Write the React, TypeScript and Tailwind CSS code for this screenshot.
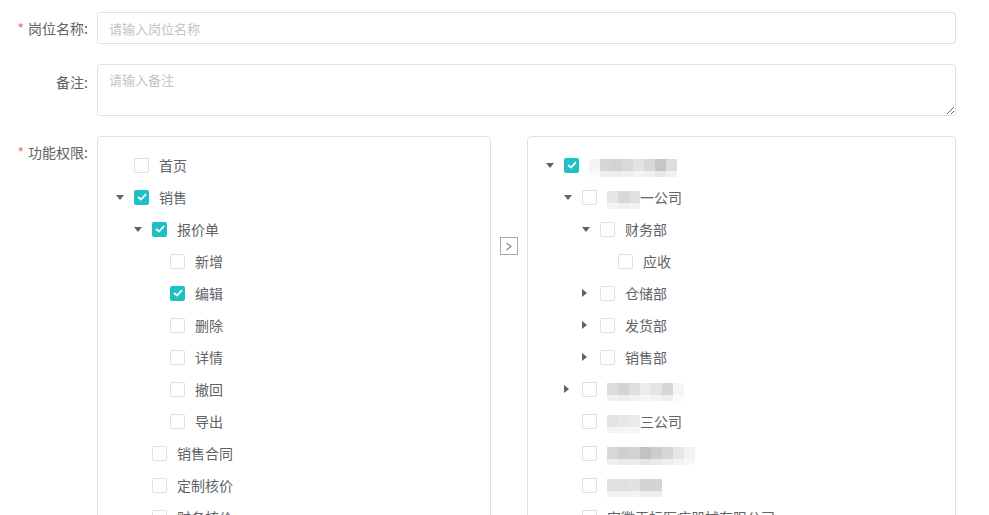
import React from "react"

type Node = {
  label?: string
  mosaic?: string[]
  suffix?: string
  level: number
  arrow?: "down" | "right"
  checked?: boolean
}

const leftTree: Node[] = [
  { label: "首页", level: 0 },
  { label: "销售", level: 0, arrow: "down", checked: true },
  { label: "报价单", level: 1, arrow: "down", checked: true },
  { label: "新增", level: 2 },
  { label: "编辑", level: 2, checked: true },
  { label: "删除", level: 2 },
  { label: "详情", level: 2 },
  { label: "撤回", level: 2 },
  { label: "导出", level: 2 },
  { label: "销售合同", level: 1 },
  { label: "定制核价", level: 1 },
  { label: "财务核价", level: 1 },
]

const rightTree: Node[] = [
  {
    level: 0,
    arrow: "down",
    checked: true,
    mosaic: ["#f4f4f4", "#d6d6d6", "#d3d3d3", "#d9d9d9", "#e2e2e2", "#d8d8d8", "#c6c6c6", "#dddddd"],
  },
  { level: 1, arrow: "down", mosaic: ["#e6e6e6", "#d8d8d8", "#e0e0e0"], suffix: "一公司" },
  { label: "财务部", level: 2, arrow: "down" },
  { label: "应收", level: 3 },
  { label: "仓储部", level: 2, arrow: "right" },
  { label: "发货部", level: 2, arrow: "right" },
  { label: "销售部", level: 2, arrow: "right" },
  {
    level: 1,
    arrow: "right",
    mosaic: ["#dcdcdc", "#d4d4d4", "#dedede", "#ececec", "#e4e4e4", "#d6d6d6", "#f6f6f6"],
  },
  { level: 1, mosaic: ["#e4e4e4", "#e8e8e8", "#ebebeb"], suffix: "三公司" },
  {
    level: 1,
    mosaic: ["#d8d8d8", "#cfcfcf", "#d2d2d2", "#c2c2c2", "#cccccc", "#d6d6d6", "#e6e6e6", "#f2f2f2"],
  },
  { level: 1, mosaic: ["#e0e0e0", "#e0e0e0", "#e2e2e2", "#d4d4d4", "#d4d4d4"] },
  { label: "安徽天标医疗器械有限公司", level: 1 },
]

function Caret({ dir }: { dir: "down" | "right" }) {
  return dir === "down" ? (
    <svg width="8" height="5" viewBox="0 0 8 5">
      <path d="M0 0 L8 0 L4 5 Z" fill="#606266" />
    </svg>
  ) : (
    <svg width="5" height="8" viewBox="0 0 5 8">
      <path d="M0 0 L5 4 L0 8 Z" fill="#606266" />
    </svg>
  )
}

function Checkbox({ checked }: { checked?: boolean }) {
  return checked ? (
    <span className="flex h-[15px] w-[15px] items-center justify-center rounded-[2px] bg-[#1ec0c6]">
      <svg width="10" height="8" viewBox="0 0 10 8">
        <path d="M1 4 L4 6.6 L9 1.2" fill="none" stroke="#fff" strokeWidth="1.8" />
      </svg>
    </span>
  ) : (
    <span className="h-[15px] w-[15px] rounded-[2px] border border-[#dcdfe6] bg-white" />
  )
}

// blurred (pixelated) company names
function Mosaic({ shades }: { shades: string[] }) {
  return (
    <span className="flex flex-col">
      <span className="flex">
        {shades.map((c, i) => (
          <span key={i} className="h-[12px] w-[11px]" style={{ background: c }} />
        ))}
      </span>
      <span className="flex opacity-40">
        {shades.map((c, i) => (
          <span key={i} className="h-[6px] w-[11px]" style={{ background: c }} />
        ))}
      </span>
    </span>
  )
}

function TreeRow({ node }: { node: Node }) {
  return (
    <div className="flex h-[32px] items-center" style={{ paddingLeft: 16 + node.level * 18 }}>
      <span className="flex w-[20px] items-center pl-[2px]">
        {node.arrow && <Caret dir={node.arrow} />}
      </span>
      <Checkbox checked={node.checked} />
      <span className="ml-[10px] flex items-center text-[14px] text-[#606266]">
        {node.mosaic && (
          <span className="mt-[5px]">
            <Mosaic shades={node.mosaic} />
          </span>
        )}
        {node.label}
        {node.suffix}
      </span>
    </div>
  )
}

export default function App() {
  return (
    <div
      className="h-screen overflow-hidden bg-white pr-[33px] pt-[12px]"
      style={{ fontFamily: '"Noto Sans CJK SC", "Noto Sans", sans-serif' }}
    >
      <div className="flex">
        <div className="w-[97px] shrink-0 pr-[9px] text-right text-[14px] leading-[32px] text-[#606266]">
          <span className="mr-[4px] text-[#f56c6c]">*</span>岗位名称:
        </div>
        <input
          className="h-[32px] flex-1 rounded-[4px] border border-[#dcdfe6] px-[11px] text-[13px] text-[#606266] outline-none placeholder:text-[#c0c4cc]"
          placeholder="请输入岗位名称"
        />
      </div>

      <div className="mt-[20px] flex">
        <div className="w-[97px] shrink-0 pr-[9px] pt-[2px] text-right text-[14px] leading-[32px] text-[#606266]">
          备注:
        </div>
        <textarea
          className="h-[52px] flex-1 rounded-[4px] border border-[#dcdfe6] px-[11px] py-[5px] text-[13px] text-[#606266] outline-none placeholder:text-[#c0c4cc]"
          placeholder="请输入备注"
        />
      </div>

      <div className="mt-[20px] flex">
        <div className="w-[97px] shrink-0 pr-[9px] text-right text-[14px] leading-[32px] text-[#606266]">
          <span className="mr-[4px] text-[#f56c6c]">*</span>功能权限:
        </div>
        <div className="flex flex-1">
          <div className="h-[420px] w-[394px] shrink-0 rounded-[4px] border border-[#dcdfe6] pt-[12px]">
            {leftTree.map((n, i) => (
              <TreeRow key={i} node={n} />
            ))}
          </div>
          <div className="flex w-[36px] shrink-0 justify-center pt-[101px]">
            <span className="flex h-[18px] w-[18px] items-center justify-center border border-[#a8a8a8] bg-white">
              <svg width="8" height="9" viewBox="0 0 8 9">
                <path d="M1.5 1 L6 4.5 L1.5 8" fill="none" stroke="#888" strokeWidth="1.2" />
              </svg>
            </span>
          </div>
          <div className="h-[420px] flex-1 rounded-[4px] border border-[#dcdfe6] pt-[12px]">
            {rightTree.map((n, i) => (
              <TreeRow key={i} node={n} />
            ))}
          </div>
        </div>
      </div>
    </div>
  )
}
